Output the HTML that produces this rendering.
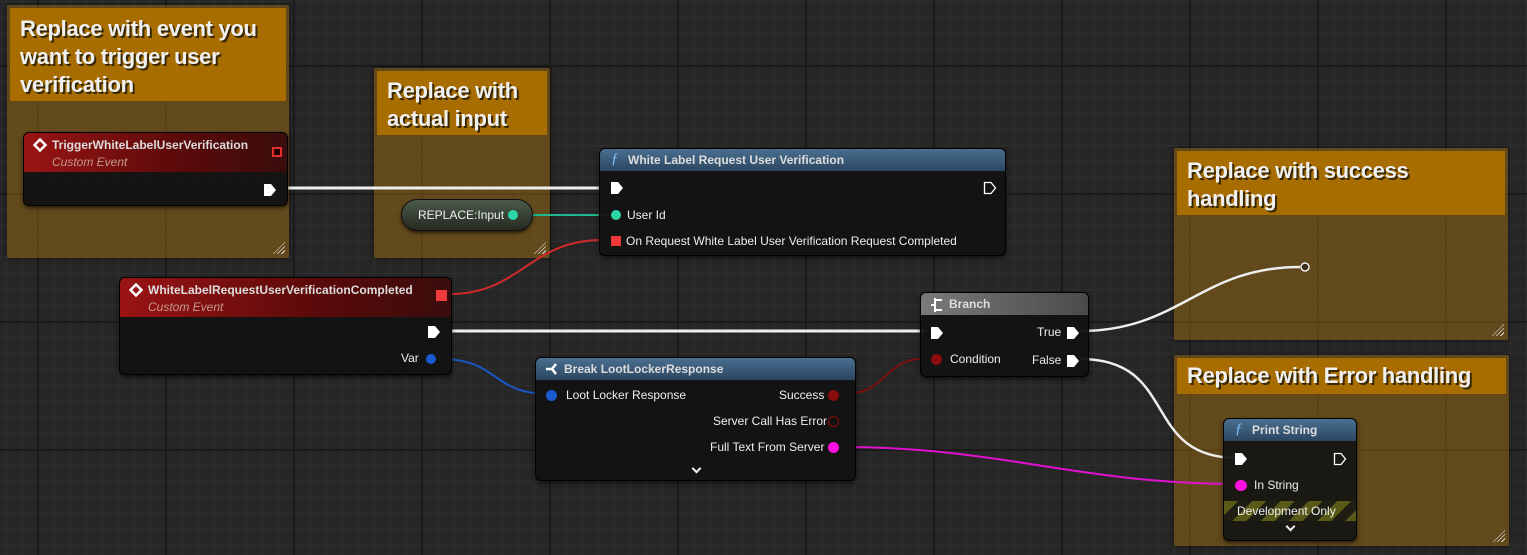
<!DOCTYPE html>
<html><head><meta charset="utf-8"><style>
*{margin:0;padding:0;box-sizing:border-box}
body{width:1527px;height:555px;overflow:hidden;position:relative;font-family:"Liberation Sans",sans-serif;
background-color:#262626;
background-image:
linear-gradient(to right,#1a1a1a 0,#1a1a1a 2px,transparent 2px),
linear-gradient(to bottom,#1a1a1a 0,#1a1a1a 2px,transparent 2px),
linear-gradient(to right,#303030 0,#303030 1px,transparent 1px),
linear-gradient(to bottom,#303030 0,#303030 1px,transparent 1px);
background-size:128px 128px,128px 128px,16px 16px,16px 16px;
background-position:37px 0,0 65px,6px 0,0 1px;}
.c{position:absolute;background:rgba(165,112,15,0.47);box-shadow:0 0 4px rgba(0,0,0,.6);border-radius:2px}
.c .h{background:#a86d00;margin:3px;color:#f0f0f0;font-weight:bold;font-size:22px;letter-spacing:-0.3px;line-height:28px;padding:8px 10px;text-shadow:2px 2px 0 #3a2800}
.c .r{position:absolute;right:4px;bottom:4px;width:12px;height:12px;background:repeating-linear-gradient(135deg,transparent 0 2px,#ddd 2px 3px);clip-path:polygon(100% 0,100% 100%,0 100%)}
.n{position:absolute;background:rgba(18,18,18,.95);border:1px solid #000;border-radius:6px;box-shadow:0 2px 4px rgba(0,0,0,.6);color:#eee;font-size:12px;overflow:hidden}
.nh{height:22px;padding-left:28px;font-weight:bold;font-size:12px;line-height:22px;color:#ddd;position:relative}
.red{background:linear-gradient(to right,#9a1414,#5a0a0a 60%,#3a0c0c);height:39px;line-height:normal;padding-top:5px}
.red i{display:block;font-style:italic;font-weight:normal;color:#c49a8a;margin-top:3px}
.blue{background:linear-gradient(to bottom,#4a6f90,#2b4660)}
.gray{background:linear-gradient(to right,#7a7a7a,#4a4a4a)}
.t{position:absolute;font-size:12px;color:#eee;white-space:nowrap}
svg{position:absolute;left:0;top:0}
.chev{position:absolute;width:7px;height:7px;border-right:2px solid #eee;border-bottom:2px solid #eee;transform:rotate(45deg)}
</style></head><body>

<div class="c" style="left:7px;top:5px;width:282px;height:253px"><div class="h" style="height:93px;padding-top:7px">Replace with event you want to trigger user verification</div><div class="r"></div></div>
<div class="c" style="left:374px;top:68px;width:176px;height:190px"><div class="h" style="height:64px;padding-top:6px">Replace with actual input</div><div class="r"></div></div>
<div class="c" style="left:1174px;top:148px;width:334px;height:192px"><div class="h" style="height:64px;padding-top:6px">Replace with success handling</div><div class="r"></div></div>
<div class="c" style="left:1174px;top:355px;width:335px;height:191px"><div class="h" style="height:36px;padding-top:4px">Replace with Error handling</div><div class="r"></div></div>

<svg width="1527" height="555">
<path d="M287 188 L600 188" stroke="#eee" stroke-width="3" fill="none"/>
<path d="M520 215 L612 215" stroke="#1fb88e" stroke-width="2" fill="none"/>
<path d="M450 294 C520 294,530 240,602 240" stroke="#d02a2a" stroke-width="2" fill="none"/>
<path d="M452 331 L925 331" stroke="#eee" stroke-width="3" fill="none"/>
<path d="M440 359 C500 359,490 394,550 394" stroke="#1a55c0" stroke-width="2" fill="none"/>
<path d="M843 394 C890 394,880 358,930 358" stroke="#7a1010" stroke-width="2" fill="none"/>
<path d="M1080 331 C1180 331,1200 267,1300 267" stroke="#eee" stroke-width="2.5" fill="none"/>
<circle cx="1305" cy="267" r="4" fill="#3a2a1a" stroke="#eee" stroke-width="1.5"/>
<path d="M1080 359 C1180 359,1140 458,1238 458" stroke="#eee" stroke-width="2.5" fill="none"/>
<path d="M843 447 C1000 447,1080 484,1238 484" stroke="#e010d0" stroke-width="2" fill="none"/>
</svg>

<div class="n" style="left:23px;top:132px;width:265px;height:74px">
<div class="nh red">TriggerWhiteLabelUserVerification<i>Custom Event</i></div>
<svg width="20" height="20" style="left:9px;top:5px"><path d="M7 1.5 L12.5 7 L7 12.5 L1.5 7Z" fill="none" stroke="#fff" stroke-width="2.5"/></svg>
<div style="position:absolute;left:248px;top:14px;width:10px;height:10px;border:2px solid #e03030;background:#200"></div>
<svg width="14" height="14" style="left:239px;top:50px"><path d="M1 1 H8 L13 7 L8 13 H1Z" fill="#fff"/></svg>
</div>

<div style="position:absolute;left:401px;top:199px;width:132px;height:32px;border-radius:16px;background:linear-gradient(#4a5a4a,#262a22);border:1px solid #111;box-shadow:0 2px 3px rgba(0,0,0,.6)"></div>
<div class="t" style="left:418px;top:208px">REPLACE:Input</div>
<div style="position:absolute;left:508px;top:210px;width:10px;height:10px;border-radius:50%;background:#2ad6a6"></div>

<div class="n" style="left:599px;top:148px;width:407px;height:108px">
<div class="nh blue">White Label Request User Verification</div>
<span style="position:absolute;left:11px;top:2px;color:#7cc4ff;font-style:italic;font-family:'Liberation Serif',serif;font-size:15px">ƒ</span>
<svg width="14" height="14" style="left:10px;top:32px"><path d="M1 1 H8 L13 7 L8 13 H1Z" fill="#fff"/></svg>
<svg width="14" height="14" style="left:383px;top:32px"><path d="M1.5 1.5 H8 L12.5 7 L8 12.5 H1.5Z" fill="none" stroke="#fff" stroke-width="1.3"/></svg>
<div style="position:absolute;left:11px;top:61px;width:10px;height:10px;border-radius:50%;background:#2ad6a6"></div>
<div class="t" style="left:27px;top:59px">User Id</div>
<div style="position:absolute;left:11px;top:87px;width:10px;height:10px;background:#f03a3a"></div>
<div class="t" style="left:26px;top:85px">On Request White Label User Verification Request Completed</div>
</div>

<div class="n" style="left:119px;top:277px;width:333px;height:98px">
<div class="nh red">WhiteLabelRequestUserVerificationCompleted<i>Custom Event</i></div>
<svg width="20" height="20" style="left:9px;top:5px"><path d="M7 1.5 L12.5 7 L7 12.5 L1.5 7Z" fill="none" stroke="#fff" stroke-width="2.5"/></svg>
<div style="position:absolute;left:316px;top:12px;width:11px;height:11px;background:#f03a3a"></div>
<svg width="14" height="14" style="left:307px;top:47px"><path d="M1 1 H8 L13 7 L8 13 H1Z" fill="#fff"/></svg>
<div class="t" style="left:281px;top:73px">Var</div>
<div style="position:absolute;left:306px;top:76px;width:10px;height:10px;border-radius:50%;background:#1a5ad0"></div>
</div>

<div class="n" style="left:920px;top:292px;width:169px;height:85px">
<div class="nh gray">Branch</div>
<svg width="16" height="18" style="left:8px;top:3px"><path d="M6 2 V16 M6 4 H13 M6 14 H13 M2 9 H6" stroke="#fff" stroke-width="2" fill="none"/></svg>
<svg width="14" height="14" style="left:9px;top:33px"><path d="M1 1 H8 L13 7 L8 13 H1Z" fill="#fff"/></svg>
<div class="t" style="left:116px;top:32px">True</div>
<svg width="14" height="14" style="left:145px;top:33px"><path d="M1 1 H8 L13 7 L8 13 H1Z" fill="#fff"/></svg>
<div style="position:absolute;left:10px;top:61px;width:11px;height:11px;border-radius:50%;background:#8a0c0c"></div>
<div class="t" style="left:29px;top:59px">Condition</div>
<div class="t" style="left:111px;top:60px">False</div>
<svg width="14" height="14" style="left:145px;top:61px"><path d="M1 1 H8 L13 7 L8 13 H1Z" fill="#fff"/></svg>
</div>

<div class="n" style="left:535px;top:357px;width:321px;height:124px">
<div class="nh blue">Break LootLockerResponse</div>
<svg width="16" height="16" style="left:8px;top:3px"><path d="M2 8 H8 M8 8 L12 3 M8 8 L12 13" stroke="#fff" stroke-width="2.5" fill="none"/></svg>
<div style="position:absolute;left:10px;top:32px;width:11px;height:11px;border-radius:50%;background:#1a5ad0"></div>
<div class="t" style="left:30px;top:30px">Loot Locker Response</div>
<div class="t" style="left:243px;top:30px">Success</div>
<div style="position:absolute;left:292px;top:32px;width:11px;height:11px;border-radius:50%;background:#8a0c0c"></div>
<div class="t" style="left:177px;top:56px">Server Call Has Error</div>
<div style="position:absolute;left:292px;top:58px;width:11px;height:11px;border-radius:50%;border:1.5px solid #8a0c0c"></div>
<div class="t" style="left:174px;top:82px">Full Text From Server</div>
<div style="position:absolute;left:292px;top:84px;width:11px;height:11px;border-radius:50%;background:#ff10e0"></div>
<div class="chev" style="left:157px;top:107px"></div>
</div>

<div class="n" style="left:1223px;top:418px;width:134px;height:123px;background:rgba(22,22,18,.95)">
<div class="nh blue">Print String</div>
<span style="position:absolute;left:11px;top:2px;color:#7cc4ff;font-style:italic;font-family:'Liberation Serif',serif;font-size:15px">ƒ</span>
<svg width="14" height="14" style="left:10px;top:33px"><path d="M1 1 H8 L13 7 L8 13 H1Z" fill="#fff"/></svg>
<svg width="14" height="14" style="left:109px;top:33px"><path d="M1.5 1.5 H8 L12.5 7 L8 12.5 H1.5Z" fill="none" stroke="#fff" stroke-width="1.3"/></svg>
<div style="position:absolute;left:11px;top:61px;width:12px;height:11px;border-radius:50%;background:#ff10e0"></div>
<div class="t" style="left:30px;top:59px">In String</div>
<div style="position:absolute;left:0;top:82px;width:134px;height:20px;background:repeating-linear-gradient(135deg,#5a5a18 0 10px,#1e1e14 10px 20px)"></div>
<div class="t" style="left:13px;top:85px">Development Only</div>
<div class="chev" style="left:63px;top:104px"></div>
</div>

</body></html>
